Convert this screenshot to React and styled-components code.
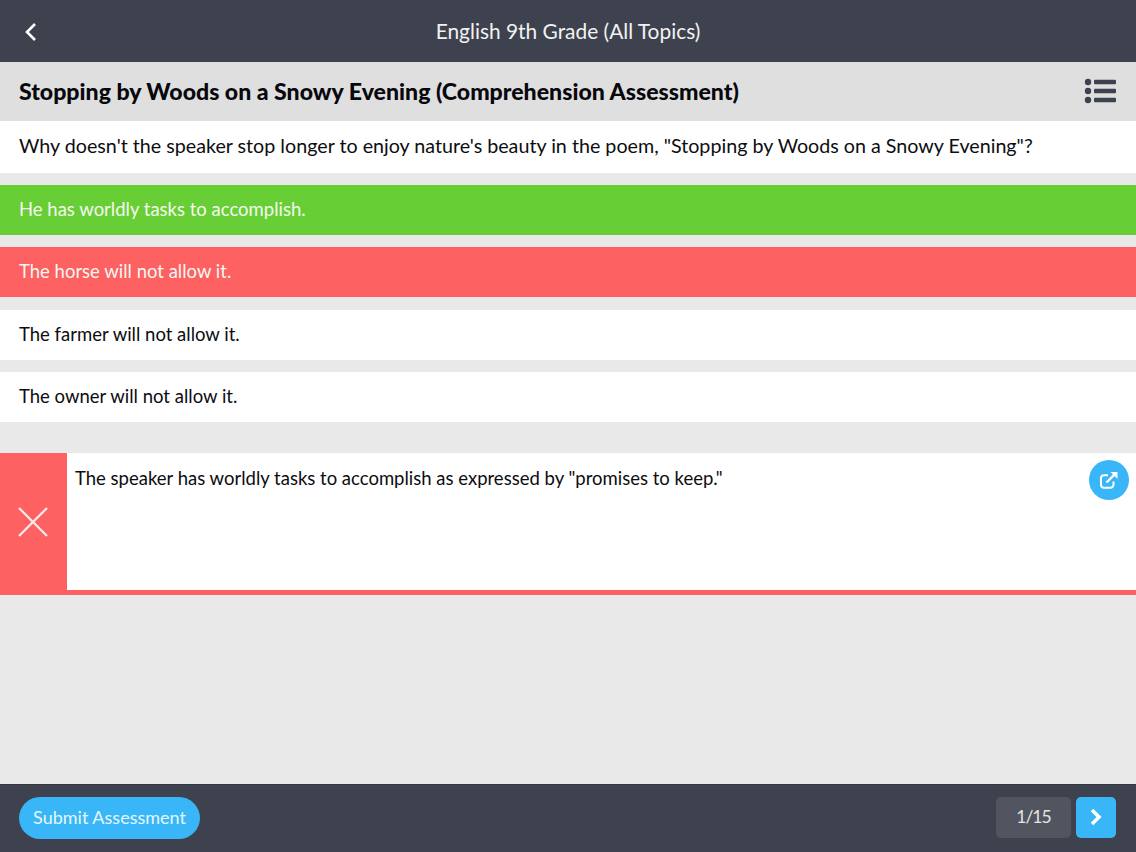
import React from "react";
import styled, { createGlobalStyle } from "styled-components";

const GlobalStyle = createGlobalStyle`
  html, body {
    margin: 0;
    padding: 0;
    background: #e9e9ea;
  }
  * {
    box-sizing: border-box;
  }
`;

const Page = styled.div`
  width: 1136px;
  height: 852px;
  display: flex;
  flex-direction: column;
  overflow: hidden;
  background: #e9e9ea;
  font-family: "Lato", "Liberation Sans", sans-serif;
  color: #0d0d10;
`;

const Header = styled.header`
  height: 62px;
  flex: none;
  display: flex;
  align-items: center;
  justify-content: center;
  position: relative;
  padding-bottom: 2px;
  background: #3e424e;
  color: #f1f2f3;
  font-size: 20.9px;
`;

const BackButton = styled.button`
  position: absolute;
  left: 24px;
  top: 22px;
  width: 14px;
  height: 20px;
  padding: 0;
  border: 0;
  background: none;
  display: block;
`;

const TitleBar = styled.div`
  height: 59px;
  flex: none;
  display: flex;
  align-items: center;
  justify-content: space-between;
  padding: 0 20px 1px 19px;
  background: #dfdfe0;
`;

const Title = styled.h1`
  margin: 0;
  font-size: 23.1px;
  font-weight: 900;
  color: #08080c;
`;

const Question = styled.div`
  height: 52px;
  flex: none;
  display: flex;
  align-items: center;
  padding: 0 19px 3px;
  margin-bottom: 12px;
  background: #fff;
  font-size: 19.7px;
`;

const Options = styled.div`
  display: flex;
  flex-direction: column;
  gap: 12.33px;
`;

const Option = styled.div`
  height: 50px;
  display: flex;
  align-items: center;
  padding: 0 19px 2px;
  font-size: 18.5px;
  background: ${(p) => p.$bg || "#fff"};
  color: ${(p) => (p.$bg ? "#f4f7f0" : "#0d0d10")};
`;

const Feedback = styled.div`
  height: 142px;
  flex: none;
  margin-top: 31px;
  display: flex;
  background: #fd6162;
  padding-bottom: 5px;
`;

const FeedbackMark = styled.div`
  width: 67px;
  flex: none;
  display: flex;
  align-items: center;
  justify-content: center;
  padding: 2px 1px 0 0;
`;

const FeedbackBody = styled.div`
  flex: 1;
  position: relative;
  padding: 13px 8px;
  background: #fff;
  font-size: 18.5px;
  line-height: 24px;
`;

const ShareButton = styled.button`
  position: absolute;
  top: 7px;
  right: 7px;
  width: 40px;
  height: 40px;
  padding: 0;
  border: 0;
  border-radius: 50%;
  background: #38b6f8;
  display: flex;
  align-items: center;
  justify-content: center;
`;

const Spacer = styled.div`
  flex: 1;
`;

const Footer = styled.footer`
  height: 68px;
  flex: none;
  display: flex;
  align-items: center;
  justify-content: space-between;
  padding: 0 20px 2px 19px;
  background: #3e424e;
  border-top: 1px solid #34373f;
`;

const Submit = styled.button`
  width: 181px;
  height: 42px;
  padding: 0 0 2px;
  border: 0;
  border-radius: 21px;
  background: #38b6f8;
  color: #e6f6ff;
  font-family: inherit;
  font-size: 18px;
`;

const Pager = styled.div`
  display: flex;
  align-items: center;
  gap: 5px;
`;

const PageCount = styled.div`
  width: 75px;
  height: 41px;
  display: flex;
  align-items: center;
  justify-content: center;
  padding-bottom: 2px;
  border-radius: 5px;
  background: #51555f;
  color: #e4e5e7;
  font-size: 17.5px;
  letter-spacing: -1px;
`;

const NextButton = styled.button`
  width: 40px;
  height: 41px;
  padding: 0 0 2px;
  border: 0;
  border-radius: 5px;
  background: #38b6f8;
  display: flex;
  align-items: center;
  justify-content: center;
`;

const ListIcon = () => (
  <svg width="32" height="26" viewBox="0 0 32 26" fill="#3e424e">
    <circle cx="4" cy="4" r="3.2" />
    <circle cx="4" cy="13" r="3.2" />
    <circle cx="4" cy="22" r="3.2" />
    <rect x="10" y="1.8" width="22" height="4.4" rx="1" />
    <rect x="10" y="10.8" width="22" height="4.4" rx="1" />
    <rect x="10" y="19.8" width="22" height="4.4" rx="1" />
  </svg>
);

const ShareIcon = () => (
  <svg width="20" height="20" viewBox="0 0 20 20" fill="none" stroke="#fff" strokeWidth="2">
    <path d="M14.5 11.5v3.2a3 3 0 0 1-3 3H5a3 3 0 0 1-3-3V8.3a3 3 0 0 1 3-3h4" />
    <path d="M7.5 12.5L17 3" strokeWidth="2.4" />
    <path d="M11.5 2h7v7z" fill="#fff" stroke="none" />
  </svg>
);

const App = () => {
  return (
    <Page>
      <GlobalStyle />
      <Header>
        <BackButton aria-label="Back">
          <svg width="14" height="20" viewBox="0 0 14 20" fill="none" stroke="#fff" strokeWidth="2.6">
            <path d="M11 2L3 10l8 8" />
          </svg>
        </BackButton>
        English 9th Grade (All Topics)
      </Header>
      <TitleBar>
        <Title>Stopping by Woods on a Snowy Evening (Comprehension Assessment)</Title>
        <ListIcon />
      </TitleBar>
      <Question>
        Why doesn't the speaker stop longer to enjoy nature's beauty in the poem, "Stopping by Woods on a Snowy Evening"?
      </Question>
      <Options>
        <Option $bg="#67cf35">He has worldly tasks to accomplish.</Option>
        <Option $bg="#fd6162">The horse will not allow it.</Option>
        <Option>The farmer will not allow it.</Option>
        <Option>The owner will not allow it.</Option>
      </Options>
      <Feedback>
        <FeedbackMark>
          <svg width="32" height="32" viewBox="0 0 32 32" stroke="#fde9e9" strokeWidth="2.3">
            <path d="M2 2l28 28M30 2L2 30" />
          </svg>
        </FeedbackMark>
        <FeedbackBody>
          The speaker has worldly tasks to accomplish as expressed by "promises to keep."
          <ShareButton aria-label="Open">
            <ShareIcon />
          </ShareButton>
        </FeedbackBody>
      </Feedback>
      <Spacer />
      <Footer>
        <Submit>Submit Assessment</Submit>
        <Pager>
          <PageCount>1/15</PageCount>
          <NextButton aria-label="Next">
            <svg width="14" height="20" viewBox="0 0 14 20" fill="none" stroke="#fff" strokeWidth="3.6">
              <path d="M3 3l7 7-7 7" />
            </svg>
          </NextButton>
        </Pager>
      </Footer>
    </Page>
  );
};

export default App;
